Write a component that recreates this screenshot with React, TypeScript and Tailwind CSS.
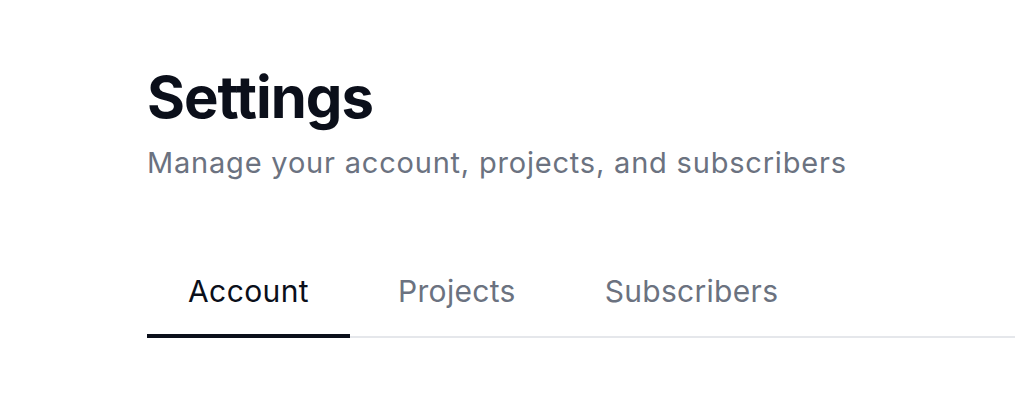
import React from "react";

export default function App() {
  const tabs = ["Account", "Projects", "Subscribers"];
  return (
    <div
      className="w-[1015px] h-[406px] bg-white overflow-hidden pl-[147px] pt-[65px]"
      style={{ fontFamily: "Inter, 'Noto Sans', sans-serif" }}
    >
      <h1 className="text-[58px] leading-[64px] font-bold text-[#0b0f1a] tracking-[-1px]">Settings</h1>
      <p className="mt-[16px] text-[29px] leading-[36px] tracking-[0.8px] text-[#6b7280]">
        Manage your account, projects, and subscribers
      </p>
      <div className="mt-[90px] flex gap-[7px] border-b-2 border-[#e5e7eb]">
        {tabs.map((t, i) => (
          <div
            key={t}
            className={
              i === 0
                ? "px-[41px] pb-[23px] -mb-[2px] border-b-4 border-[#0b0f1a] text-[30px] leading-[40px] tracking-[0.4px] text-[#0b0f1a]"
                : "px-[41px] pb-[23px] text-[30px] leading-[40px] tracking-[0.3px] text-[#6b7280]"
            }
          >
            {t}
          </div>
        ))}
      </div>
    </div>
  );
}
